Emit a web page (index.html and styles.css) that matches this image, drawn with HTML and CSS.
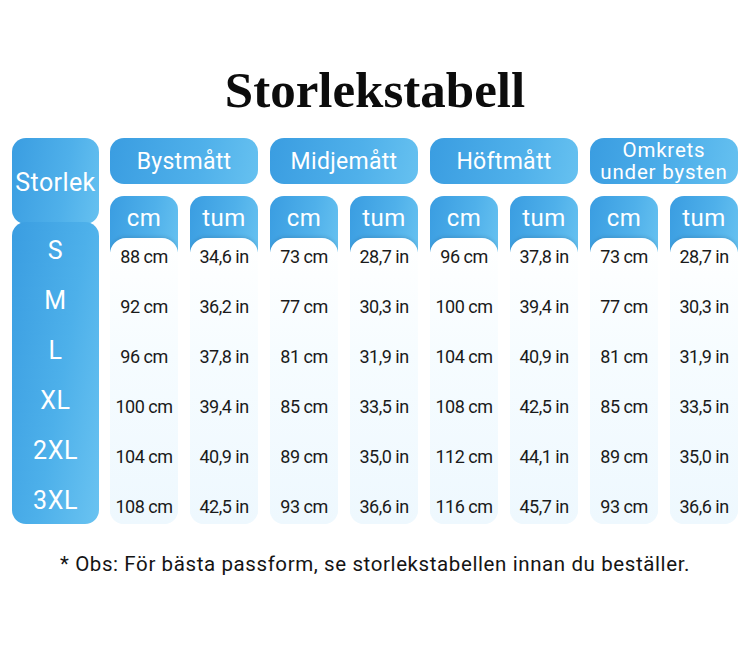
FILE: index.html
```html
<!DOCTYPE html>
<html lang="sv">
<head>
<meta charset="utf-8">
<title>Storlekstabell</title>
<link rel="stylesheet" href="styles.css">
</head>
<body>
<div class="page">
  <h1 class="title">Storlekstabell</h1>
  <div class="table">
    <div class="size-col">
      <div class="size-head">Storlek</div>
      <div class="size-body">
        <div class="size">S</div>
        <div class="size">M</div>
        <div class="size">L</div>
        <div class="size">XL</div>
        <div class="size">2XL</div>
        <div class="size">3XL</div>
      </div>
    </div>

    <div class="group">
      <div class="group-head">Bystmått</div>
      <div class="subcols">
        <div class="col"><div class="col-head">cm</div><div class="col-body">
          <div class="cell">88 cm</div><div class="cell">92 cm</div><div class="cell">96 cm</div><div class="cell">100 cm</div><div class="cell">104 cm</div><div class="cell">108 cm</div>
        </div></div>
        <div class="col"><div class="col-head">tum</div><div class="col-body">
          <div class="cell">34,6 in</div><div class="cell">36,2 in</div><div class="cell">37,8 in</div><div class="cell">39,4 in</div><div class="cell">40,9 in</div><div class="cell">42,5 in</div>
        </div></div>
      </div>
    </div>

    <div class="group">
      <div class="group-head">Midjemått</div>
      <div class="subcols">
        <div class="col"><div class="col-head">cm</div><div class="col-body">
          <div class="cell">73 cm</div><div class="cell">77 cm</div><div class="cell">81 cm</div><div class="cell">85 cm</div><div class="cell">89 cm</div><div class="cell">93 cm</div>
        </div></div>
        <div class="col"><div class="col-head">tum</div><div class="col-body">
          <div class="cell">28,7 in</div><div class="cell">30,3 in</div><div class="cell">31,9 in</div><div class="cell">33,5 in</div><div class="cell">35,0 in</div><div class="cell">36,6 in</div>
        </div></div>
      </div>
    </div>

    <div class="group">
      <div class="group-head">Höftmått</div>
      <div class="subcols">
        <div class="col"><div class="col-head">cm</div><div class="col-body">
          <div class="cell">96 cm</div><div class="cell">100 cm</div><div class="cell">104 cm</div><div class="cell">108 cm</div><div class="cell">112 cm</div><div class="cell">116 cm</div>
        </div></div>
        <div class="col"><div class="col-head">tum</div><div class="col-body">
          <div class="cell">37,8 in</div><div class="cell">39,4 in</div><div class="cell">40,9 in</div><div class="cell">42,5 in</div><div class="cell">44,1 in</div><div class="cell">45,7 in</div>
        </div></div>
      </div>
    </div>

    <div class="group">
      <div class="group-head two-line"><span class="line">Omkrets</span><span class="line">under bysten</span></div>
      <div class="subcols">
        <div class="col"><div class="col-head">cm</div><div class="col-body">
          <div class="cell">73 cm</div><div class="cell">77 cm</div><div class="cell">81 cm</div><div class="cell">85 cm</div><div class="cell">89 cm</div><div class="cell">93 cm</div>
        </div></div>
        <div class="col"><div class="col-head">tum</div><div class="col-body">
          <div class="cell">28,7 in</div><div class="cell">30,3 in</div><div class="cell">31,9 in</div><div class="cell">33,5 in</div><div class="cell">35,0 in</div><div class="cell">36,6 in</div>
        </div></div>
      </div>
    </div>
  </div>
  <p class="note">* Obs: För bästa passform, se storlekstabellen innan du beställer.</p>
</div>
</body>
</html>
```

FILE: styles.css
```css
html, body {
  margin: 0;
  padding: 0;
  background: #ffffff;
}
.page {
  width: 750px;
  height: 662px;
  overflow: hidden;
  font-family: Roboto, "Liberation Sans", sans-serif;
}
.title {
  margin: 0;
  padding-top: 62px;
  height: 56px;
  text-align: center;
  font-family: "Liberation Serif", serif;
  font-weight: 700;
  font-size: 51px;
  line-height: 56px;
  color: #0c0c0c;
}
.table {
  display: flex;
  margin-top: 20px;
  padding-left: 12px;
  gap: 11px;
}
.table .group + .group {
  margin-left: 1px;
}
.size-col {
  width: 87px;
  display: flex;
  flex-direction: column;
}
.size-head,
.size-body,
.group-head,
.col-head {
  color: #ffffff;
  background: linear-gradient(100deg, #3a9de1 0%, #4fb0ea 60%, #66c1f0 100%);
}
.size-head {
  height: 86px;
  border-radius: 14px;
  display: flex;
  align-items: center;
  justify-content: center;
  font-size: 25px;
  letter-spacing: 0.4px;
  padding-top: 2px;
  box-sizing: border-box;
}
.size-body {
  margin-top: -2px;
  height: 302px;
  border-radius: 14px;
  box-sizing: border-box;
  padding-top: 14px;
  display: flex;
  flex-direction: column;
  gap: 20px;
  align-items: center;
  background: linear-gradient(100deg, #3a9de1 0%, #4db0ea 55%, #6ac3f1 100%);
}
.size {
  height: 30px;
  line-height: 30px;
  font-size: 25px;
  letter-spacing: 0.6px;
}
.group {
  width: 148px;
  display: flex;
  flex-direction: column;
  gap: 12px;
}
.group-head {
  height: 46px;
  border-radius: 14px;
  display: flex;
  align-items: center;
  justify-content: center;
  text-align: center;
  font-size: 23px;
  letter-spacing: 0.3px;
}
.group-head.two-line {
  flex-direction: column;
  font-size: 20.5px;
  letter-spacing: 0.8px;
  line-height: 20px;
  gap: 2px;
  padding-bottom: 1px;
  box-sizing: border-box;
}
.line {
  display: block;
  height: 20px;
}
.subcols {
  display: flex;
  gap: 12px;
}
.col {
  width: 68px;
  height: 328px;
  border-radius: 14px;
  overflow: hidden;
  display: flex;
  flex-direction: column;
  background: #eff9fe;
}
.col-head {
  height: 56px;
  box-sizing: border-box;
  padding-top: 8px;
  text-align: center;
  font-size: 24px;
  letter-spacing: 0.5px;
  line-height: 28px;
  flex: none;
}
.col-body {
  margin-top: -14px;
  flex: 1;
  border-radius: 16px 16px 0 0;
  background: linear-gradient(180deg, #ffffff 0%, #f6fcff 40%, #eef8fe 100%);
  box-shadow: 0 -2px 3px rgba(40, 90, 130, 0.18);
  box-sizing: border-box;
  padding: 4px 0 2px;
  display: flex;
  flex-direction: column;
  gap: 20px;
  align-items: center;
}
.cell {
  height: 30px;
  line-height: 30px;
  font-size: 18px;
  color: #1a1a1a;
  white-space: nowrap;
  letter-spacing: -0.5px;
}
.note {
  margin: 28px 0 0;
  text-align: center;
  font-size: 20.5px;
  color: #141414;
  letter-spacing: 0.6px;
  white-space: nowrap;
}
```
